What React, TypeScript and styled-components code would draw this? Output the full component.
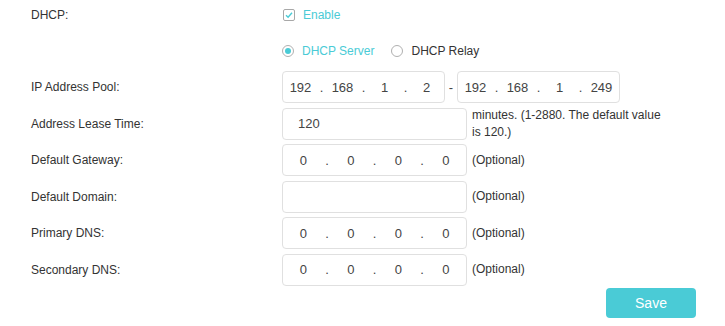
import React from "react";
import styled, { createGlobalStyle } from "styled-components";

const GlobalStyle = createGlobalStyle`
  html, body {
    margin: 0;
    padding: 0;
    background: #fff;
  }
  body {
    font-family: "Liberation Sans", Arial, sans-serif;
    font-size: 12px;
    color: #333;
  }
`;

const ACCENT = "#4acbd6";

const IpField = ({ parts, width }: { parts: string[]; width: number }) => (
  <Box $width={width}>
    {parts.map((p, i) => (
      <React.Fragment key={i}>
        {i > 0 && <Dot>.</Dot>}
        <Seg readOnly value={p} />
      </React.Fragment>
    ))}
  </Box>
);

const App = () => {
  return (
    <>
      <GlobalStyle />
      <Form>
        <TopRow>
          <Label>DHCP:</Label>
          <Option>
            <CheckBox>
              <svg width="8" height="8" viewBox="0 0 8 8">
                <path d="M1 4.2 L3.1 6.2 L7 1.8" fill="none" stroke={ACCENT} strokeWidth="1.4" />
              </svg>
            </CheckBox>
            <OptionText $active>Enable</OptionText>
          </Option>
        </TopRow>

        <RadioRow>
          <Label />
          <Option>
            <Radio $checked />
            <OptionText $active>DHCP Server</OptionText>
          </Option>
          <Option $gap={17}>
            <Radio />
            <OptionText>DHCP Relay</OptionText>
          </Option>
        </RadioRow>

        <FieldRow $first>
          <Label>IP Address Pool:</Label>
          <IpField parts={["192", "168", "1", "2"]} width={163} />
          <Dash>-</Dash>
          <IpField parts={["192", "168", "1", "249"]} width={163} />
        </FieldRow>

        <FieldRow>
          <Label>Address Lease Time:</Label>
          <Box $width={185}>
            <TextInput readOnly value="120" />
          </Box>
          <Note $wide>minutes. (1-2880. The default value is 120.)</Note>
        </FieldRow>

        <FieldRow>
          <Label>Default Gateway:</Label>
          <IpField parts={["0", "0", "0", "0"]} width={185} />
          <Note>(Optional)</Note>
        </FieldRow>

        <FieldRow>
          <Label>Default Domain:</Label>
          <Box $width={185}>
            <TextInput readOnly value="" />
          </Box>
          <Note>(Optional)</Note>
        </FieldRow>

        <FieldRow>
          <Label>Primary DNS:</Label>
          <IpField parts={["0", "0", "0", "0"]} width={185} />
          <Note>(Optional)</Note>
        </FieldRow>

        <FieldRow>
          <Label>Secondary DNS:</Label>
          <IpField parts={["0", "0", "0", "0"]} width={185} />
          <Note>(Optional)</Note>
        </FieldRow>

        <Actions>
          <SaveButton>Save</SaveButton>
        </Actions>
      </Form>
    </>
  );
};

export default App;

const Form = styled.div`
  width: 725px;
  display: flex;
  flex-direction: column;
`;

const TopRow = styled.div`
  display: flex;
  align-items: center;
  height: 30px;
`;

const RadioRow = styled(TopRow)`
  margin-top: 6px;
`;

const FieldRow = styled.div<{ $first?: boolean }>`
  display: flex;
  align-items: center;
  height: 32px;
  margin-top: ${(p) => (p.$first ? "5px" : "4.6px")};
`;

const Label = styled.div`
  width: 282px;
  padding-left: 31px;
  box-sizing: border-box;
  flex-shrink: 0;
  color: #333;
`;

const Option = styled.label<{ $gap?: number }>`
  display: flex;
  align-items: center;
  gap: 8px;
  margin-left: ${(p) => p.$gap ?? 0}px;
  cursor: pointer;
`;

const OptionText = styled.span<{ $active?: boolean }>`
  color: ${(p) => (p.$active ? ACCENT : "#333")};
`;

const CheckBox = styled.span`
  width: 12px;
  height: 12px;
  box-sizing: border-box;
  border: 1px solid #a8a8a8;
  border-radius: 2px;
  display: flex;
  align-items: center;
  justify-content: center;
  margin-left: 1px;
`;

const Radio = styled.span<{ $checked?: boolean }>`
  width: 12px;
  height: 12px;
  box-sizing: border-box;
  border: 1px solid #b0b0b0;
  border-radius: 50%;
  display: flex;
  align-items: center;
  justify-content: center;

  &::after {
    content: "";
    width: 6px;
    height: 6px;
    border-radius: 50%;
    background: ${(p) => (p.$checked ? ACCENT : "transparent")};
  }
`;

const Box = styled.div<{ $width: number }>`
  width: ${(p) => p.$width}px;
  height: 32px;
  box-sizing: border-box;
  border: 1px solid #e0e0e0;
  border-radius: 4px;
  display: flex;
  align-items: center;
  flex-shrink: 0;
  background: #fff;
`;

const Seg = styled.input`
  flex: 1;
  min-width: 0;
  width: 0;
  height: 100%;
  border: 0;
  outline: 0;
  padding: 0;
  background: transparent;
  text-align: center;
  font-family: "Liberation Sans", Arial, sans-serif;
  font-size: 13px;
  color: #444;
`;

const Dot = styled.span`
  width: 7px;
  text-align: center;
  font-size: 13px;
  color: #444;
  flex-shrink: 0;
`;

const TextInput = styled.input`
  flex: 1;
  height: 100%;
  border: 0;
  outline: 0;
  padding: 0 0 0 15px;
  background: transparent;
  font-family: "Liberation Sans", Arial, sans-serif;
  font-size: 13px;
  color: #444;
`;

const Dash = styled.span`
  width: 12px;
  text-align: center;
  color: #444;
  font-size: 13px;
`;

const Note = styled.div<{ $wide?: boolean }>`
  margin-left: 5px;
  width: ${(p) => (p.$wide ? "200px" : "auto")};
  line-height: 17px;
  color: #333;
`;

const Actions = styled.div`
  display: flex;
  justify-content: flex-end;
  padding-right: 29px;
  margin-top: 2.5px;
`;

const SaveButton = styled.button`
  width: 90px;
  height: 30px;
  border: 0;
  border-radius: 4px;
  background: ${ACCENT};
  color: #fff;
  font-family: "Liberation Sans", Arial, sans-serif;
  font-size: 14px;
  cursor: pointer;
`;
